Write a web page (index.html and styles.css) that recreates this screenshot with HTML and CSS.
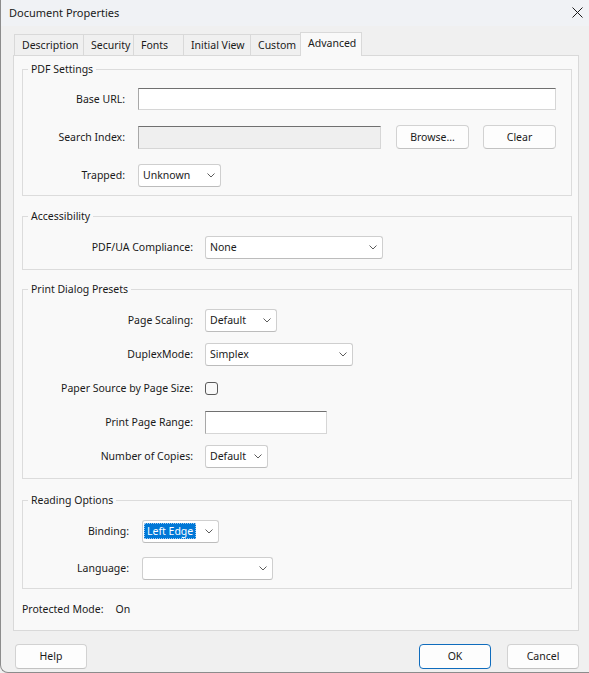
FILE: index.html
```html
<!DOCTYPE html>
<html lang="en">
<head>
    <meta charset="UTF-8">
    <title>Document Properties</title>
    <link rel="stylesheet" href="styles.css">
</head>
<body>
    <div class="titlebar">
        <span>Document Properties</span>
        <svg class="close" width="11" height="11" viewBox="0 0 11 11">
            <path d="M0.5 0.5 L10.5 10.5 M10.5 0.5 L0.5 10.5" stroke="#1a1a1a" stroke-width="1" fill="none"/>
        </svg>
    </div>

    <div class="tabs">
        <div class="tab tab-description">Description</div>
        <div class="tab tab-security">Security</div>
        <div class="tab tab-fonts">Fonts</div>
        <div class="tab tab-initial">Initial View</div>
        <div class="tab tab-custom">Custom</div>
        <div class="tab active">Advanced</div>
    </div>

    <div class="panel">
        <fieldset class="group group-pdf">
            <legend>PDF Settings</legend>
            <div class="form form-pdf">
                <label>Base URL:</label>
                <input class="text base-url" type="text">

                <label>Search Index:</label>
                <div class="inline">
                    <input class="text search-index" type="text" disabled>
                    <button class="btn browse">Browse...</button>
                    <button class="btn clear">Clear</button>
                </div>

                <label>Trapped:</label>
                <div class="combo w-trapped">
                    <span>Unknown</span>
                    <svg width="8" height="5" viewBox="0 0 8 5"><polyline points="0.5,0.5 4,4 7.5,0.5" fill="none" stroke="#5c5c5c"/></svg>
                </div>
            </div>
        </fieldset>

        <fieldset class="group group-access">
            <legend>Accessibility</legend>
            <div class="form form-wide">
                <label>PDF/UA Compliance:</label>
                <div class="combo w-pdfua">
                    <span>None</span>
                    <svg width="8" height="5" viewBox="0 0 8 5"><polyline points="0.5,0.5 4,4 7.5,0.5" fill="none" stroke="#5c5c5c"/></svg>
                </div>
            </div>
        </fieldset>

        <fieldset class="group group-print">
            <legend>Print Dialog Presets</legend>
            <div class="form form-wide form-print">
                <label>Page Scaling:</label>
                <div class="combo w-scaling">
                    <span>Default</span>
                    <svg width="8" height="5" viewBox="0 0 8 5"><polyline points="0.5,0.5 4,4 7.5,0.5" fill="none" stroke="#5c5c5c"/></svg>
                </div>

                <label>DuplexMode:</label>
                <div class="combo w-duplex">
                    <span>Simplex</span>
                    <svg width="8" height="5" viewBox="0 0 8 5"><polyline points="0.5,0.5 4,4 7.5,0.5" fill="none" stroke="#5c5c5c"/></svg>
                </div>

                <label>Paper Source by Page Size:</label>
                <div><span class="checkbox"></span></div>

                <label>Print Page Range:</label>
                <input class="text page-range" type="text">

                <label>Number of Copies:</label>
                <div class="combo w-copies">
                    <span>Default</span>
                    <svg width="8" height="5" viewBox="0 0 8 5"><polyline points="0.5,0.5 4,4 7.5,0.5" fill="none" stroke="#5c5c5c"/></svg>
                </div>
            </div>
        </fieldset>

        <fieldset class="group group-reading">
            <legend>Reading Options</legend>
            <div class="form form-reading">
                <label>Binding:</label>
                <div class="combo w-binding">
                    <span class="selected">Left Edge</span>
                    <svg width="8" height="5" viewBox="0 0 8 5"><polyline points="0.5,0.5 4,4 7.5,0.5" fill="none" stroke="#5c5c5c"/></svg>
                </div>

                <label>Language:</label>
                <div class="combo w-language">
                    <span></span>
                    <svg width="8" height="5" viewBox="0 0 8 5"><polyline points="0.5,0.5 4,4 7.5,0.5" fill="none" stroke="#5c5c5c"/></svg>
                </div>
            </div>
        </fieldset>

        <div class="protected">
            <span>Protected Mode:</span>
            <span>On</span>
        </div>
    </div>

    <div class="footer">
        <button class="btn dialog-btn">Help</button>
        <div class="footer-right">
            <button class="btn dialog-btn default">OK</button>
            <button class="btn dialog-btn">Cancel</button>
        </div>
    </div>
</body>
</html>
```

FILE: styles.css
```css
* {
    box-sizing: border-box;
}
html {
    background-color: #f0f0f0;
}
body {
    margin: 0;
    height: 673px;
    font-family: "Noto Sans", "Segoe UI", Arial, sans-serif;
    font-size: 10.5px;
    line-height: 15px;
    color: #1a1a1a;
    background-color: #f0f0f0;
    border-left: 1px solid #8c8c8c;
    border-bottom: 1px solid #8c8c8c;
    border-bottom-left-radius: 8px;
    overflow: hidden;
}
.titlebar {
    height: 26px;
    display: flex;
    align-items: center;
    justify-content: space-between;
    padding: 0 6px 1px 8px;
    font-size: 11px;
    background-color: #f0f2f5;
}
.close {
    display: block;
}
.tabs {
    height: 29px;
    display: flex;
    align-items: flex-end;
    margin-left: 13px;
}
.tab {
    height: 21px;
    display: flex;
    align-items: center;
    padding: 0 7px;
    white-space: nowrap;
    border: 1px solid #d9d9d9;
    border-bottom: none;
    margin-right: -1px;
    background-color: #f0f0f0;
}
.tab-description { width: 70px; }
.tab-security { width: 51px; }
.tab-fonts { width: 51px; }
.tab-initial { width: 68px; }
.tab-custom { width: 51px; }
.tab.active {
    position: relative;
    z-index: 1;
    width: 62px;
    height: 24px;
    margin-bottom: -1px;
    padding-bottom: 3px;
    background-color: #f9f9f9;
}
.panel {
    width: 566px;
    margin-left: 12px;
    padding: 6px 6px 13px 8px;
    background-color: #f9f9f9;
    border: 1px solid #d9d9d9;
}
.group {
    margin: 0;
    min-width: 0;
    padding: 0;
    border: 1px solid #dcdcdc;
}
.group legend {
    margin-left: 5px;
    padding: 0 3px;
    line-height: 15px;
}
.group-pdf {
    padding-top: 10px;
    padding-bottom: 8px;
}
.group-access {
    margin-top: 13px;
    padding-top: 11px;
    padding-bottom: 10px;
}
.group-print {
    margin-top: 12px;
    padding-top: 11px;
    padding-bottom: 10px;
}
.group-reading {
    margin-top: 14px;
    padding-top: 11px;
    padding-bottom: 8px;
}
.form {
    display: grid;
    grid-auto-rows: 24px;
    align-items: center;
}
.form label {
    text-align: right;
    white-space: nowrap;
}
.form-pdf {
    grid-template-columns: 102px auto;
    column-gap: 13px;
    row-gap: 14px;
}
.form-wide {
    grid-template-columns: 170px auto;
    column-gap: 12px;
}
.form-print {
    row-gap: 10px;
}
.form-reading {
    grid-template-columns: 106px auto;
    column-gap: 13px;
    row-gap: 13px;
}
.inline {
    display: flex;
    align-items: center;
}
.text {
    font: inherit;
    height: 23px;
    margin: 0;
    padding: 0 4px;
    background-color: #fff;
    border: 1px solid #d6d6d6;
    border-top-color: #707070;
    border-left-color: #a8a8a8;
    border-radius: 0;
    outline: none;
}
.base-url {
    width: 418px;
    height: 22px;
}
.search-index {
    width: 243px;
    background-color: #efefef;
}
.page-range {
    width: 122px;
}
.btn {
    font: inherit;
    color: #1a1a1a;
    height: 24px;
    width: 73px;
    padding: 0;
    background-color: #fdfdfd;
    border: 1px solid #d2d2d2;
    border-bottom-color: #c2c2c2;
    border-radius: 4px;
}
.browse {
    margin-left: 15px;
}
.clear {
    margin-left: 14px;
}
.combo {
    height: 23px;
    display: flex;
    align-items: center;
    justify-content: space-between;
    padding: 0 5px 0 4px;
    background-color: #fff;
    border: 1px solid #cfcfcf;
    border-bottom-color: #bcbcbc;
    border-radius: 3px;
}
.combo svg {
    display: block;
    flex-shrink: 0;
}
.w-trapped { width: 83px; }
.w-pdfua { width: 178px; }
.w-scaling { width: 72px; }
.w-duplex { width: 148px; }
.w-copies { width: 63px; }
.w-binding {
    width: 77px;
    padding-left: 1px;
}
.w-language { width: 131px; }
.selected {
    padding: 0 2px;
    line-height: 14px;
    color: #fff;
    background-color: #0078d7;
    border: 1px dotted #9cc8ef;
}
.checkbox {
    display: block;
    width: 13px;
    height: 13px;
    background-color: #f9f9f9;
    border: 1px solid #5a5a5a;
    border-radius: 3px;
}
.protected {
    display: flex;
    gap: 12px;
    margin-top: 13px;
}
.footer {
    display: flex;
    justify-content: space-between;
    margin: 13px 10px 0 14px;
}
.footer-right {
    display: flex;
    gap: 16px;
}
.dialog-btn {
    width: 72px;
    height: 25px;
}
.dialog-btn.default {
    border-color: #0f6cbd;
}
```
